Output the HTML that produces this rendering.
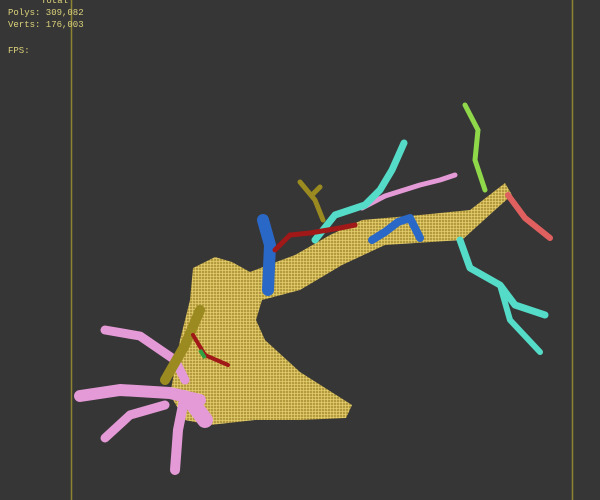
<!DOCTYPE html>
<html><head><style>
html,body{margin:0;padding:0;background:#363636;width:600px;height:500px;overflow:hidden}
.t{position:absolute;font-family:"Liberation Mono",monospace;font-size:9px;color:#dcd27a;line-height:12px}
</style></head><body>
<svg width="600" height="500" style="position:absolute;left:0;top:0">
<defs>
<pattern id="w" width="3" height="3" patternUnits="userSpaceOnUse">
<rect width="3" height="3" fill="#b49a3e"/><path d="M0 0L3 0M0 0L0 3" stroke="#eed874" stroke-width="1.2"/>
</pattern>
</defs>
<rect width="600" height="500" fill="#363636"/>
<line x1="71.5" y1="0" x2="71.5" y2="500" stroke="#8c8432" stroke-width="1.5"/>
<line x1="572.5" y1="0" x2="572.5" y2="500" stroke="#8c8432" stroke-width="1.5"/>
<!-- trunk -->
<path d="M193 268L215 257L232 262L250 272L268 265L295 255L330 235L362 220L420 215L470 210L505 183L512 195L495 210L462 240L385 245L342 265L300 290L262 300L256 320L265 340L300 372L352 405L346 418L300 420L255 420L210 425L185 420L170 395L180 340L190 300Z" fill="url(#w)"/>
<!-- pink roots -->
<g stroke="#e49ad6" fill="none" stroke-linecap="round" stroke-linejoin="round">
<path d="M105 330L140 336L175 360L185 380" stroke-width="9"/>
<path d="M80 396L120 390L170 393L200 400" stroke-width="12"/>
<path d="M105 438L130 415L165 405" stroke-width="9"/>
<path d="M175 470L178 430L185 395" stroke-width="10"/>
<path d="M190 400L205 420" stroke-width="16"/>
<path d="M362 208L385 196L420 185L440 180L455 175" stroke-width="5"/>
</g>
<!-- cyan -->
<g stroke="#55dcc8" fill="none" stroke-linecap="round" stroke-linejoin="round">
<path d="M460 240L470 268L500 285L515 305L545 315" stroke-width="7"/>
<path d="M500 285L510 320L540 352" stroke-width="6"/>
<path d="M315 240L335 215L365 205L380 190L392 170L404 143" stroke-width="7"/>
</g>
<g stroke="#8fd84a" fill="none" stroke-linecap="round"><path d="M485 190L475 160L478 130L465 105" stroke-width="5"/></g>
<g stroke="#e06060" fill="none" stroke-linecap="round"><path d="M508 195L525 218L550 238" stroke-width="6"/></g>
<g stroke="#9a8a20" fill="none" stroke-linecap="round"><path d="M323 220L315 200L300 182M312 195L320 187" stroke-width="5"/><path d="M200 310L185 345L165 380" stroke-width="10"/></g>
<g stroke="#2a68c8" fill="none" stroke-linecap="round" stroke-linejoin="round"><path d="M263 220L270 245L268 290" stroke-width="12"/><path d="M372 240L385 232L398 222L410 218L420 238" stroke-width="8"/></g>
<g stroke="#a01818" fill="none" stroke-linecap="round"><path d="M275 250L290 235L310 233L340 228L355 225" stroke-width="5"/><path d="M193 335L205 355L228 365" stroke-width="4"/></g>
<g stroke="#30a040" fill="none"><path d="M200 350L205 358" stroke-width="4"/></g>
</svg>
<div class="t" style="left:41px;top:-5px">Total</div>
<div class="t" style="left:8px;top:7px">Polys: 309,082</div>
<div class="t" style="left:8px;top:19px">Verts: 176,003</div>
<div class="t" style="left:8px;top:45px">FPS:</div>
</body></html>
